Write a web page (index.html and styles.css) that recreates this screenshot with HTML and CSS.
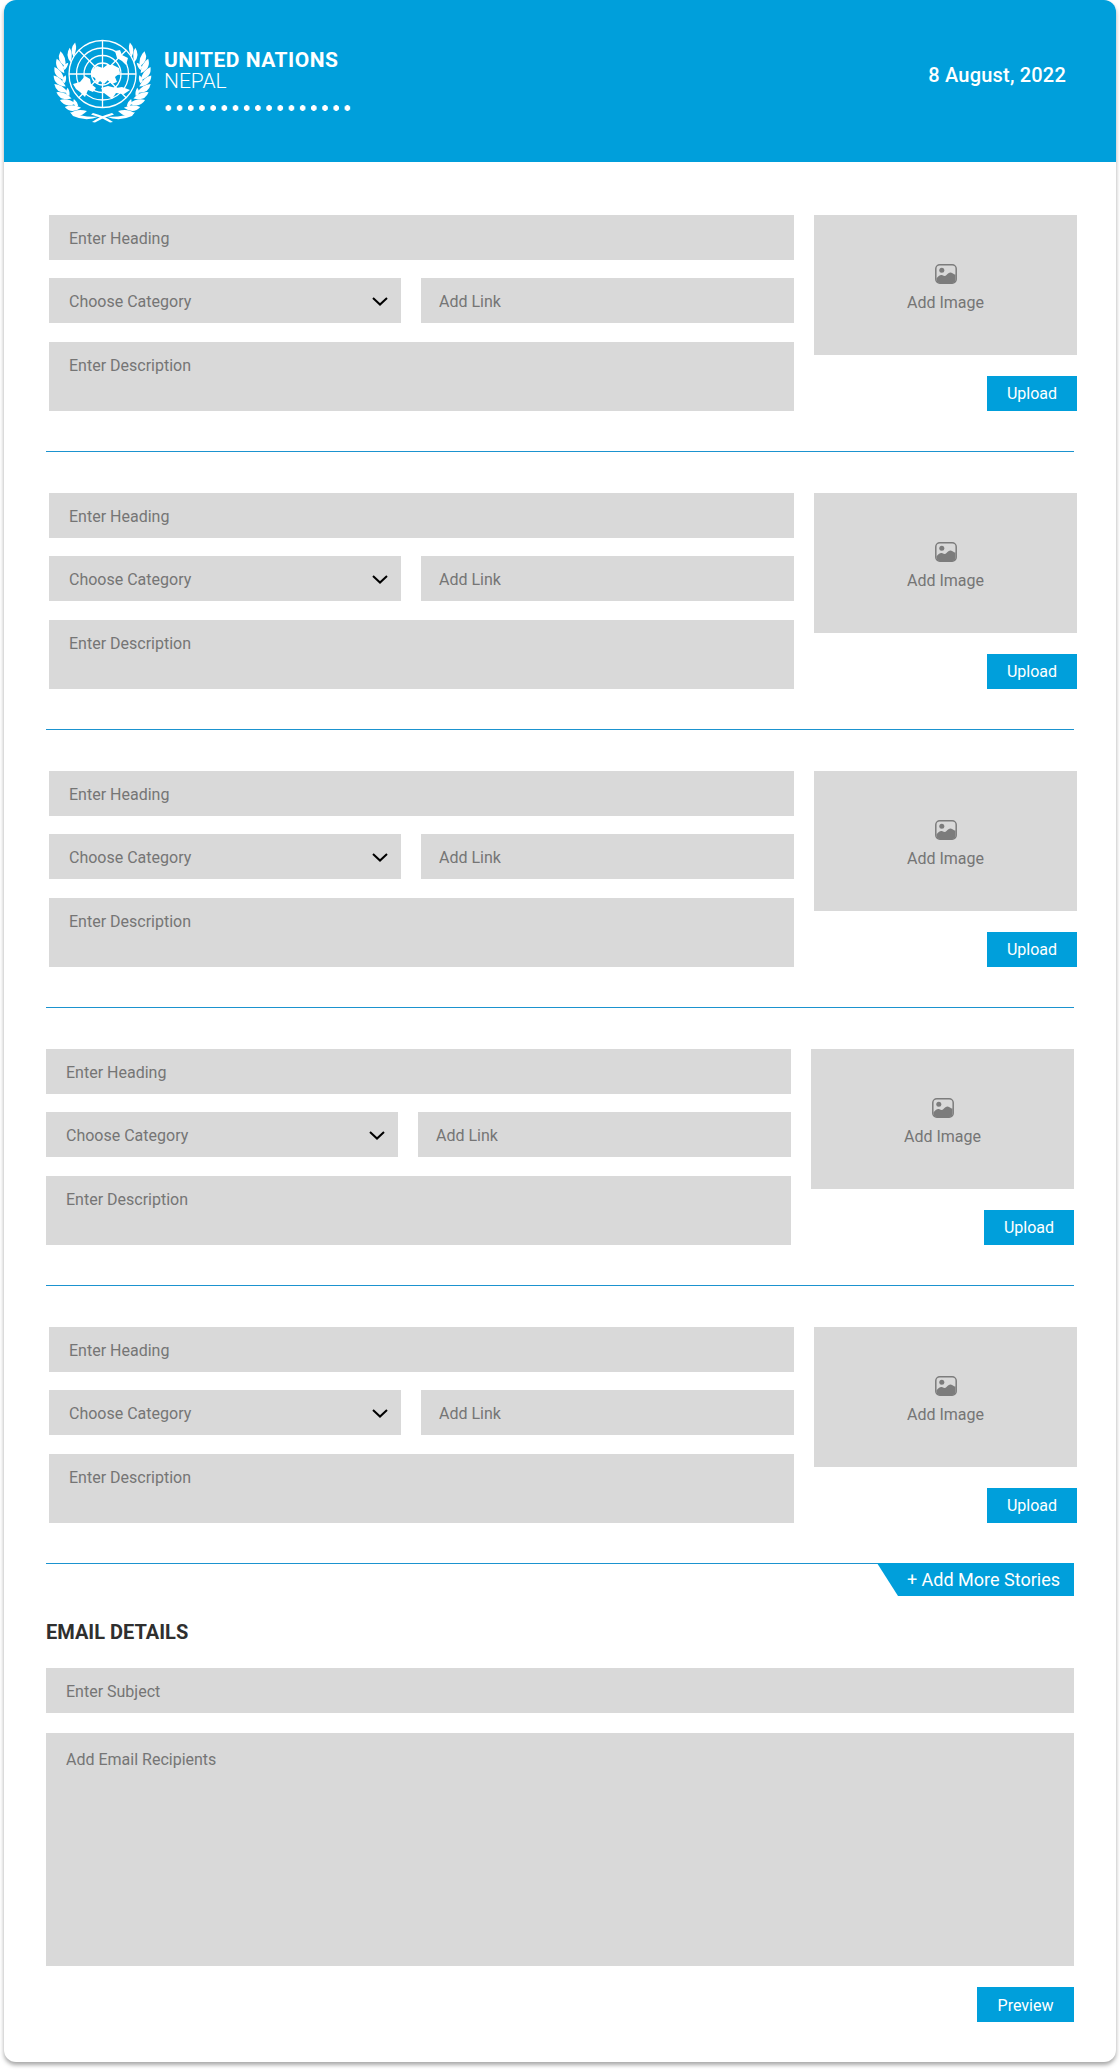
FILE: index.html
```html
<!DOCTYPE html>
<html lang="en">
<head>
    <meta charset="UTF-8">
    <meta name="viewport" content="width=device-width, initial-scale=1.0">
    <title>UN Nepal Newsletter</title>
    <link rel="stylesheet" href="styles.css">
</head>
<body>
    <svg class="icon-defs" width="0" height="0" aria-hidden="true">
        <symbol id="image-icon" viewBox="0 0 22 20">
            <rect x="0.8" y="0.8" width="20.4" height="18.4" rx="4" fill="none" stroke="#7c7c7c" stroke-width="1.5"/>
            <circle cx="6.8" cy="6.2" r="2.5" fill="#7c7c7c"/>
            <path d="M1.5 14.5 C3.5 11.5 5.5 10.3 7.5 11.2 C9 11.9 10 12.6 11.5 11 C13.5 8.5 15.5 7.7 17.5 9.2 C19 10.2 20 10.8 20.5 10.5 V15.5 Q20.5 19 17 19 H5 Q1.5 19 1.5 15.5 Z" fill="#7c7c7c"/>
        </symbol>
        <symbol id="chevron-icon" viewBox="0 0 16 9">
            <path d="M1 1 L8 7.6 L15 1" fill="none" stroke="#000" stroke-width="2"/>
        </symbol>
        <path id="leaf" d="M64.500 80 Q53 77 54.500 67 Q62 70 64.500 80 Z" fill="#fff"/>
        <path id="leaf-top" d="M68 80 Q59.500 77 60 68 Q66 71 68 80 Z" fill="#fff"/>
        <path id="leaf-inner" d="M64 80 Q66.500 77 66 72 Q62 74 62 78 Z" fill="#fff"/>
        <g id="wreath-half">
            <use href="#leaf" transform="rotate(-60 102.500 76)"/>
            <use href="#leaf" transform="rotate(-50 102.500 76)"/>
            <use href="#leaf" transform="rotate(-40 102.500 76)"/>
            <use href="#leaf" transform="rotate(-30 102.500 76)"/>
            <use href="#leaf" transform="rotate(-20 102.500 76)"/>
            <use href="#leaf" transform="rotate(-10 102.500 76)"/>
            <use href="#leaf" transform="rotate(0 102.500 76)"/>
            <use href="#leaf" transform="rotate(10 102.500 76)"/>
            <use href="#leaf" transform="rotate(20 102.500 76)"/>
            <use href="#leaf-top" transform="rotate(30 102.500 76)"/>
            <use href="#leaf-top" transform="rotate(40 102.500 76)"/>
            <use href="#leaf-inner" transform="rotate(-45 102.500 76)"/>
            <use href="#leaf-inner" transform="rotate(-25 102.500 76)"/>
            <use href="#leaf-inner" transform="rotate(-5 102.500 76)"/>
            <use href="#leaf-inner" transform="rotate(15 102.500 76)"/>
            <path d="M70 112 Q84 118 99 116.500 Q86 122 73 116 Z" fill="#fff"/>
            <path d="M92 122 Q100 116 112 113 L114 114.500 Q104 117 95 122.500 Z" fill="#fff"/>
        </g>
    </svg>

    <div class="card">
        <header class="top-bar">
            <div class="brand">
                <svg class="un-logo" viewBox="53 38 100 86" role="img" aria-label="United Nations emblem">
                    <g fill="none" stroke="#fff" stroke-width="1.3">
                        <circle cx="102.500" cy="74" r="33.500"/>
                        <circle cx="102.500" cy="74" r="26"/>
                        <circle cx="102.500" cy="74" r="18.500"/>
                        <circle cx="102.500" cy="74" r="11"/>
                        <path d="M102.500 40.500 V107.500 M69 74 H136 M78.800 50.300 L126.200 97.700 M126.200 50.300 L78.800 97.700"/>
                    </g>
                    <g fill="#fff">
                        <path d="M91 71 L97 66 L103 68 L107 65 L113 65 L119 68 L120 73 L115 77 L117 82 L112 84 L108 80 L104 84 L100 81 L97 84 L95 78 L91 76 Z"/>
                        <path d="M73 84 L80 82 L85 76 L90 79 L91 84 L96 88 L93 92 L88 90 L85 97 L80 92 L76 89 Z"/>
                        <path d="M101 88 L108 86 L116 88 L122 87 L130 90 L124 94 L116 93 L112 99 L108 96 L104 93 Z"/>
                        <path d="M115 51 L120 50 L122 55 L128 58 L126 65 L122 61 L117 58 Z"/>
                    </g>
                    <use href="#wreath-half"/>
                    <use href="#wreath-half" transform="translate(205 0) scale(-1 1)"/>
                </svg>
                <div class="brand-text">
                    <div class="brand-name">UNITED NATIONS</div>
                    <div class="brand-place">NEPAL</div>
                    <div class="brand-dots"></div>
                </div>
            </div>
            <div class="issue-date">8 August, 2022</div>
        </header>

        <main class="content">
            <section class="story">
                <div class="story-fields">
                    <div class="field">Enter Heading</div>
                    <div class="field-row">
                        <div class="field field-select">Choose Category <svg class="chevron"><use href="#chevron-icon"/></svg></div>
                        <div class="field field-link">Add Link</div>
                    </div>
                    <div class="field field-desc">Enter Description</div>
                </div>
                <div class="story-media">
                    <div class="image-drop"><svg class="image-icon"><use href="#image-icon"/></svg>Add Image</div>
                    <button class="btn" type="button">Upload</button>
                </div>
            </section>
            <hr class="divider">

            <section class="story">
                <div class="story-fields">
                    <div class="field">Enter Heading</div>
                    <div class="field-row">
                        <div class="field field-select">Choose Category <svg class="chevron"><use href="#chevron-icon"/></svg></div>
                        <div class="field field-link">Add Link</div>
                    </div>
                    <div class="field field-desc">Enter Description</div>
                </div>
                <div class="story-media">
                    <div class="image-drop"><svg class="image-icon"><use href="#image-icon"/></svg>Add Image</div>
                    <button class="btn" type="button">Upload</button>
                </div>
            </section>
            <hr class="divider">

            <section class="story">
                <div class="story-fields">
                    <div class="field">Enter Heading</div>
                    <div class="field-row">
                        <div class="field field-select">Choose Category <svg class="chevron"><use href="#chevron-icon"/></svg></div>
                        <div class="field field-link">Add Link</div>
                    </div>
                    <div class="field field-desc">Enter Description</div>
                </div>
                <div class="story-media">
                    <div class="image-drop"><svg class="image-icon"><use href="#image-icon"/></svg>Add Image</div>
                    <button class="btn" type="button">Upload</button>
                </div>
            </section>
            <hr class="divider">

            <section class="story story-flush">
                <div class="story-fields">
                    <div class="field">Enter Heading</div>
                    <div class="field-row">
                        <div class="field field-select">Choose Category <svg class="chevron"><use href="#chevron-icon"/></svg></div>
                        <div class="field field-link">Add Link</div>
                    </div>
                    <div class="field field-desc">Enter Description</div>
                </div>
                <div class="story-media">
                    <div class="image-drop"><svg class="image-icon"><use href="#image-icon"/></svg>Add Image</div>
                    <button class="btn" type="button">Upload</button>
                </div>
            </section>
            <hr class="divider">

            <section class="story">
                <div class="story-fields">
                    <div class="field">Enter Heading</div>
                    <div class="field-row">
                        <div class="field field-select">Choose Category <svg class="chevron"><use href="#chevron-icon"/></svg></div>
                        <div class="field field-link">Add Link</div>
                    </div>
                    <div class="field field-desc">Enter Description</div>
                </div>
                <div class="story-media">
                    <div class="image-drop"><svg class="image-icon"><use href="#image-icon"/></svg>Add Image</div>
                    <button class="btn" type="button">Upload</button>
                </div>
            </section>
            <hr class="divider divider-last">

            <div class="more-bar">
                <button class="add-more" type="button">+ Add More Stories</button>
            </div>

            <section class="email">
                <h2 class="email-title">EMAIL DETAILS</h2>
                <div class="field">Enter Subject</div>
                <div class="field field-recipients">Add Email Recipients</div>
                <div class="email-actions">
                    <button class="btn btn-preview" type="button">Preview</button>
                </div>
            </section>
        </main>
    </div>
</body>
</html>
```

FILE: styles.css
```css
* {
    box-sizing: border-box;
}
body {
    margin: 0;
    padding-bottom: 8px;
    background: #fff;
    font-family: Roboto, "Liberation Sans", sans-serif;
}
.icon-defs {
    position: absolute;
}
.card {
    width: 1112px;
    height: 2062px;
    margin-left: 4px;
    background: #fff;
    border-radius: 12px;
    box-shadow: 0 3px 4px rgba(0, 0, 0, 0.35);
    overflow: hidden;
}
.top-bar {
    height: 162px;
    background: #009fdb;
    color: #fff;
    display: flex;
    align-items: center;
    justify-content: space-between;
    padding: 0 50px 12px 49px;
}
.brand {
    display: flex;
    align-items: center;
    gap: 11px;
}
.un-logo {
    width: 100px;
    height: 86px;
    margin-top: 12px;
}
.brand-text {
    padding-top: 9px;
}
.brand-name {
    font-size: 21px;
    font-weight: 700;
    line-height: 22px;
    letter-spacing: 0.5px;
}
.brand-place {
    font-size: 21px;
    font-weight: 300;
    line-height: 21px;
}
.brand-dots {
    width: 187px;
    height: 6px;
    margin-top: 13px;
    background: radial-gradient(circle, #fff 2.6px, transparent 3.1px) -1.200px 0 / 11.200px 6px repeat-x;
}
.issue-date {
    font-size: 20px;
    font-weight: 500;
    letter-spacing: 0.2px;
}
.content {
    padding: 53px 39px 0 42px;
}
.story {
    display: grid;
    grid-template-columns: 745px 263px;
    column-gap: 20px;
    padding-left: 3px;
}
.story-flush {
    padding-left: 0;
}
.story-fields {
    display: flex;
    flex-direction: column;
}
.field {
    height: 45px;
    background: #d9d9d9;
    color: #757575;
    font-size: 16px;
    line-height: 47px;
    padding-left: 20px;
}
.field-row {
    display: flex;
    gap: 20px;
    margin: 18px 0 19px;
}
.field-select {
    width: 352px;
    display: flex;
    align-items: center;
    justify-content: space-between;
    padding-top: 2px;
    padding-right: 13px;
}
.field-link {
    flex: 1;
    padding-left: 18px;
}
.field-desc {
    height: 69px;
    line-height: 20px;
    padding-top: 14px;
}
.chevron {
    width: 16px;
    height: 9px;
}
.story-media {
    display: flex;
    flex-direction: column;
    align-items: flex-end;
}
.image-drop {
    width: 100%;
    height: 140px;
    padding-top: 5px;
    background: #d9d9d9;
    color: #757575;
    font-size: 16px;
    display: flex;
    flex-direction: column;
    align-items: center;
    justify-content: center;
    gap: 9px;
}
.image-icon {
    width: 22px;
    height: 20px;
}
.btn {
    width: 90px;
    height: 35px;
    margin-top: 21px;
    border: none;
    background: #009fdb;
    color: #fff;
    font-family: inherit;
    font-size: 16px;
    padding: 0;
    cursor: pointer;
}
.divider {
    height: 1px;
    border: none;
    background: #1b93cf;
    margin: 40px 3px 41px 0;
}
.divider-last {
    margin-bottom: 0;
}
.more-bar {
    display: flex;
    justify-content: flex-end;
    margin: -1px 3px 0 0;
}
.add-more {
    width: 197px;
    height: 33px;
    border: none;
    background: #009fdb;
    color: #fff;
    font-family: inherit;
    font-size: 18px;
    text-align: right;
    padding: 0 14px 0 0;
    clip-path: polygon(0 0, 100% 0, 100% 100%, 21px 100%);
    cursor: pointer;
}
.email {
    margin-right: 3px;
}
.email-title {
    margin: 24px 0 24px;
    font-size: 20px;
    font-weight: 700;
    line-height: 24px;
    color: #2f2f2f;
}
.field-recipients {
    height: 233px;
    margin-top: 20px;
    line-height: 20px;
    padding-top: 17px;
}
.email-actions {
    display: flex;
    justify-content: flex-end;
}
.btn-preview {
    width: 97px;
    padding-top: 1px;
}
```
